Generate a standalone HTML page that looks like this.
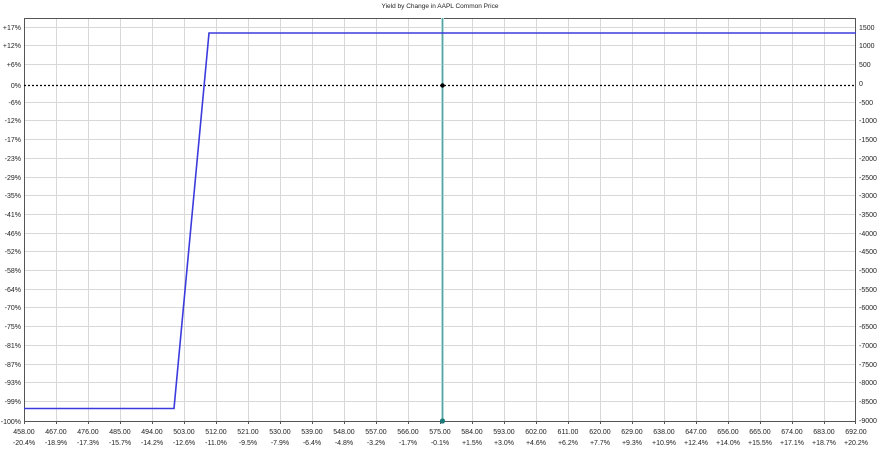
<!DOCTYPE html>
<html><head><meta charset="utf-8"><style>
html,body{margin:0;padding:0;background:#fff;}
svg{display:block;font-family:"Liberation Sans","DejaVu Sans",sans-serif;font-size:7px;fill:#222;}
</style></head><body>
<svg width="880" height="449" viewBox="0 0 880 449" xmlns="http://www.w3.org/2000/svg">
<text x="440" y="8" text-anchor="middle" font-size="6.5">Yield by Change in AAPL Common Price</text>
<g stroke="#d8d8d8" stroke-width="1">
<path d="M56.5 18V421M88.5 18V421M120.5 18V421M152.5 18V421M184.5 18V421M216.5 18V421M248.5 18V421M280.5 18V421M312.5 18V421M344.5 18V421M376.5 18V421M408.5 18V421M472.5 18V421M504.5 18V421M536.5 18V421M568.5 18V421M600.5 18V421M632.5 18V421M664.5 18V421M696.5 18V421M728.5 18V421M760.5 18V421M792.5 18V421M824.5 18V421"/>
<path d="M24 27.5H856M24 45.5H856M24 64.5H856M24 102.5H856M24 120.5H856M24 139.5H856M24 158.5H856M24 177.5H856M24 195.5H856M24 214.5H856M24 233.5H856M24 251.5H856M24 270.5H856M24 289.5H856M24 307.5H856M24 326.5H856M24 345.5H856M24 364.5H856M24 382.5H856M24 401.5H856"/>
</g>
<path d="M24.5 421V18.5H855.5V421M24 421.5H856" fill="none" stroke="#555" stroke-width="1"/>
<g stroke="#555"><path d="M24.5 421v3M56.5 421v3M88.5 421v3M120.5 421v3M152.5 421v3M184.5 421v3M216.5 421v3M248.5 421v3M280.5 421v3M312.5 421v3M344.5 421v3M376.5 421v3M408.5 421v3M440.5 421v3M472.5 421v3M504.5 421v3M536.5 421v3M568.5 421v3M600.5 421v3M632.5 421v3M664.5 421v3M696.5 421v3M728.5 421v3M760.5 421v3M792.5 421v3M824.5 421v3M855.5 421v3"/></g>
<path d="M24 85.5H856" stroke="#000" stroke-width="1.2" stroke-dasharray="2,2"/>
<rect x="441" y="18" width="3" height="403" fill="#b4dcdc"/>
<rect x="442" y="18" width="1" height="403" fill="#5aa3a3"/>
<path d="M24 408.5H174L209 33H856" fill="none" stroke="#3b3bdd" stroke-width="1.6"/>
<circle cx="442.5" cy="85.5" r="2.2" fill="#000"/>
<circle cx="442.5" cy="421" r="2.6" fill="#1a7a7a"/>
<g text-anchor="end">
<text x="21" y="30">+17%</text><text x="21" y="48">+12%</text><text x="21" y="67">+6%</text><text x="21" y="88">0%</text><text x="21" y="105">-6%</text><text x="21" y="123">-12%</text><text x="21" y="142">-17%</text><text x="21" y="161">-23%</text><text x="21" y="180">-29%</text><text x="21" y="198">-35%</text><text x="21" y="217">-41%</text><text x="21" y="236">-46%</text><text x="21" y="254">-52%</text><text x="21" y="273">-58%</text><text x="21" y="292">-64%</text><text x="21" y="310">-70%</text><text x="21" y="329">-75%</text><text x="21" y="348">-81%</text><text x="21" y="367">-87%</text><text x="21" y="385">-93%</text><text x="21" y="404">-99%</text><text x="21" y="424">-100%</text>
</g>
<g>
<text x="859" y="30">1500</text><text x="859" y="48">1000</text><text x="859" y="67">500</text><text x="859" y="86">0</text><text x="859" y="105">-500</text><text x="859" y="123">-1000</text><text x="859" y="142">-1500</text><text x="859" y="161">-2000</text><text x="859" y="180">-2500</text><text x="859" y="198">-3000</text><text x="859" y="217">-3500</text><text x="859" y="236">-4000</text><text x="859" y="254">-4500</text><text x="859" y="273">-5000</text><text x="859" y="292">-5500</text><text x="859" y="310">-6000</text><text x="859" y="329">-6500</text><text x="859" y="348">-7000</text><text x="859" y="367">-7500</text><text x="859" y="385">-8000</text><text x="859" y="404">-8500</text><text x="859" y="423">-9000</text>
</g>
<g text-anchor="middle">
<text x="24" y="434">458.00</text><text x="56" y="434">467.00</text><text x="88" y="434">476.00</text><text x="120" y="434">485.00</text><text x="152" y="434">494.00</text><text x="184" y="434">503.00</text><text x="216" y="434">512.00</text><text x="248" y="434">521.00</text><text x="280" y="434">530.00</text><text x="312" y="434">539.00</text><text x="344" y="434">548.00</text><text x="376" y="434">557.00</text><text x="408" y="434">566.00</text><text x="440" y="434">575.00</text><text x="472" y="434">584.00</text><text x="504" y="434">593.00</text><text x="536" y="434">602.00</text><text x="568" y="434">611.00</text><text x="600" y="434">620.00</text><text x="632" y="434">629.00</text><text x="664" y="434">638.00</text><text x="696" y="434">647.00</text><text x="728" y="434">656.00</text><text x="760" y="434">665.00</text><text x="792" y="434">674.00</text><text x="824" y="434">683.00</text><text x="856" y="434">692.00</text>
<text x="24" y="445">-20.4%</text><text x="56" y="445">-18.9%</text><text x="88" y="445">-17.3%</text><text x="120" y="445">-15.7%</text><text x="152" y="445">-14.2%</text><text x="184" y="445">-12.6%</text><text x="216" y="445">-11.0%</text><text x="248" y="445">-9.5%</text><text x="280" y="445">-7.9%</text><text x="312" y="445">-6.4%</text><text x="344" y="445">-4.8%</text><text x="376" y="445">-3.2%</text><text x="408" y="445">-1.7%</text><text x="440" y="445">-0.1%</text><text x="472" y="445">+1.5%</text><text x="504" y="445">+3.0%</text><text x="536" y="445">+4.6%</text><text x="568" y="445">+6.2%</text><text x="600" y="445">+7.7%</text><text x="632" y="445">+9.3%</text><text x="664" y="445">+10.9%</text><text x="696" y="445">+12.4%</text><text x="728" y="445">+14.0%</text><text x="760" y="445">+15.5%</text><text x="792" y="445">+17.1%</text><text x="824" y="445">+18.7%</text><text x="856" y="445">+20.2%</text>
</g>
</svg>
</body></html>
